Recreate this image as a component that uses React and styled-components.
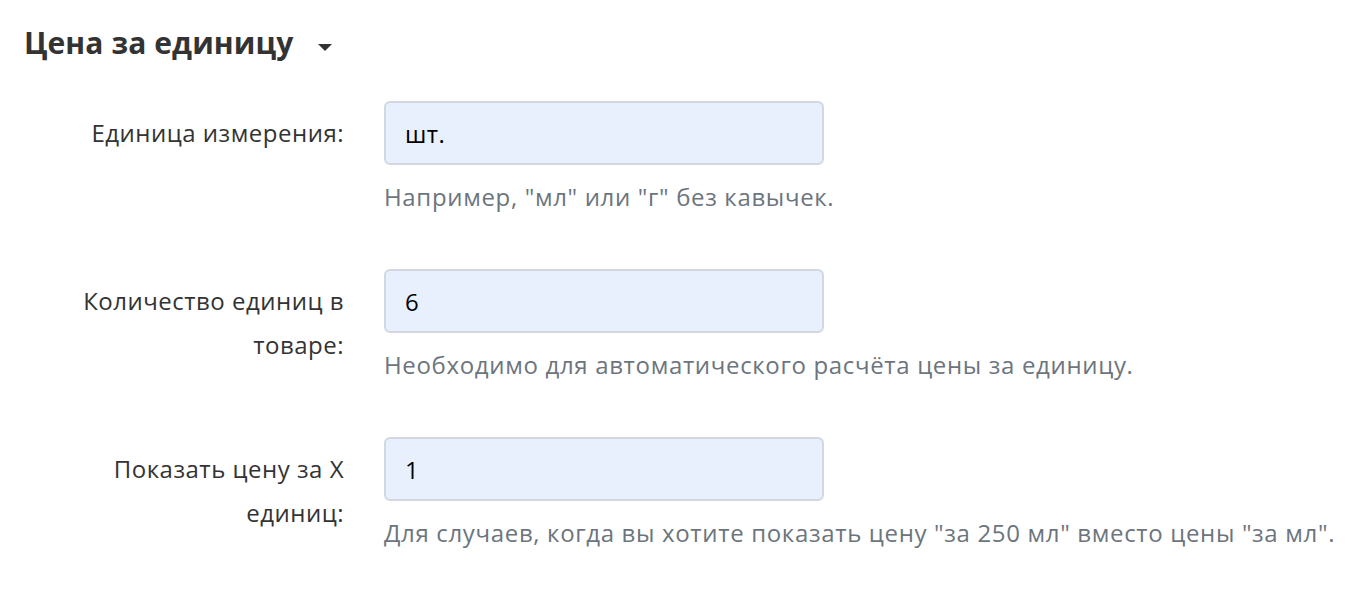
import React from 'react';
import styled, { createGlobalStyle } from 'styled-components';

const GlobalStyle = createGlobalStyle`
  html, body {
    margin: 0;
    padding: 0;
    background: #fff;
  }
  body {
    font-family: 'Open Sans', 'Noto Sans', sans-serif;
    color: #343a40;
  }
`;

const Page = styled.div`
  padding: 25px 24px 0 24px;
`;

const Heading = styled.h3`
  margin: 0 0 40px 0;
  display: flex;
  align-items: center;
  gap: 25px;
  font-size: 30px;
  line-height: 36px;
  font-weight: 700;
  letter-spacing: 0.1px;
  color: #333;
`;

const Caret = styled.span`
  width: 0;
  height: 0;
  margin-top: 8px;
  border-left: 7.5px solid transparent;
  border-right: 7.5px solid transparent;
  border-top: 7px solid #333;
`;

const Row = styled.div`
  display: grid;
  grid-template-columns: 320px 440px;
  column-gap: 40px;
  margin-bottom: 54px;
`;

const Label = styled.label`
  padding: 10px 0 0 48px;
  text-align: right;
  font-size: 24px;
  line-height: 44px;
  letter-spacing: 0.5px;
  color: #333;
`;

const Field = styled.div`
  display: flex;
  flex-direction: column;
`;

const Input = styled.input`
  box-sizing: border-box;
  width: 440px;
  height: 64px;
  padding: 0 19px;
  border: 2px solid #d3d8e0;
  border-radius: 6px;
  background: #e8f0fe;
  font-family: inherit;
  font-size: 24px;
  letter-spacing: 0.4px;
  color: #000;
  outline: none;
`;

const Help = styled.div`
  margin-top: 14px;
  white-space: nowrap;
  font-size: 24px;
  line-height: 36px;
  letter-spacing: 0.66px;
  color: #6c757d;
`;

const fields = [
  {
    id: 'unit',
    label: 'Единица измерения:',
    value: 'шт.',
    help: 'Например, "мл" или "г" без кавычек.',
  },
  {
    id: 'count',
    label: 'Количество единиц в товаре:',
    value: '6',
    help: 'Необходимо для автоматического расчёта цены за единицу.',
  },
  {
    id: 'per',
    label: 'Показать цену за X единиц:',
    value: '1',
    help: 'Для случаев, когда вы хотите показать цену "за 250 мл" вместо цены "за мл".',
  },
];

export default function App() {
  return (
    <>
      <GlobalStyle />
      <Page>
        <Heading>
          Цена за единицу
          <Caret />
        </Heading>
        {fields.map(f => (
          <Row key={f.id}>
            <Label htmlFor={f.id}>{f.label}</Label>
            <Field>
              <Input id={f.id} defaultValue={f.value} />
              <Help>{f.help}</Help>
            </Field>
          </Row>
        ))}
      </Page>
    </>
  );
}
